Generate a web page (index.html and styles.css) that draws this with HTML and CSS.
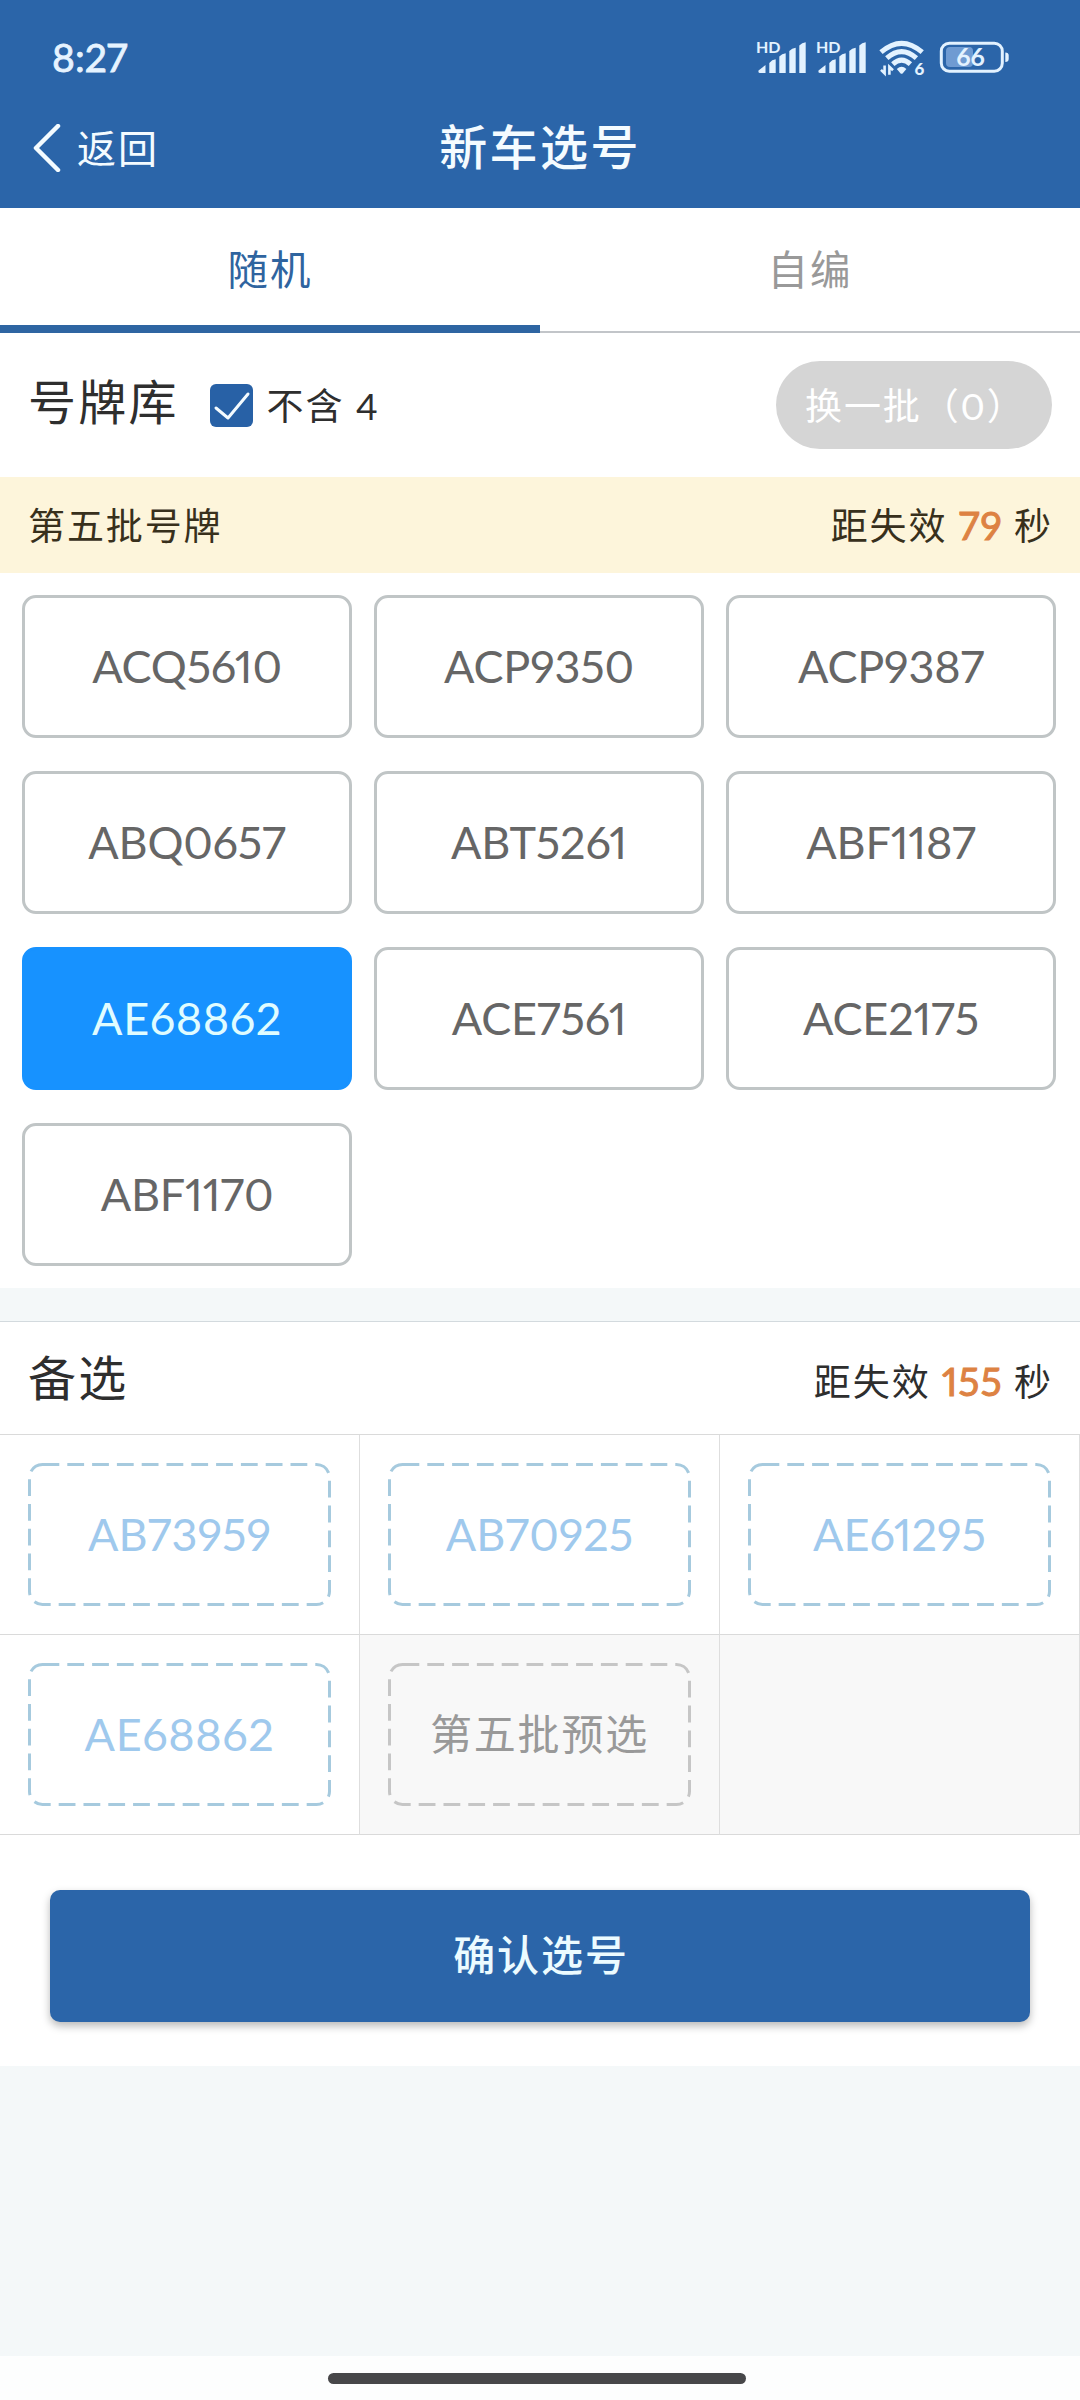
FILE: index.html
```html
<!DOCTYPE html>
<html lang="zh-CN">
<head>
  <meta charset="UTF-8">
  <title>新车选号</title>
  <link rel="stylesheet" href="styles.css">
</head>
<body>
  <header class="header">
    <div class="status">
      <span class="clock">8:27</span>
      <svg class="status-icons" viewBox="0 0 260 40">
        <defs>
          <g id="signal">
            <text x="0" y="13.2" class="hd">HD</text>
            <path d="M2.5 30.5 L9.5 25 V33 H4 Q2 33 2.5 30.5Z M13.3 23 Q16 19.5 19.7 19.2 V33 H13.3Z M23.3 16.5 Q26 13.5 29.7 13.2 V33 H23.3Z M33.3 11 Q36 8 39.7 7.7 V33 H33.3Z M43.3 5.5 Q46 2.5 49.7 2.2 V33 H43.3Z"/>
          </g>
        </defs>
        <use href="#signal"/>
        <use href="#signal" x="60"/>
        <g class="wifi">
          <path d="M125 12.2 Q145.6 -5.6 166.2 12.2"/>
          <path d="M130.8 18.2 Q145.6 5 160.4 18.2"/>
          <path d="M136.8 24.2 Q145.6 16.2 154.4 24.2"/>
        </g>
        <path d="M140.8 29 Q145.6 24.6 150.4 29 L146.8 33.2 Q145.6 34.4 144.4 33.2Z"/>
        <path class="arrows" d="M128.6 25.4 V33.4 L125 29.8 M133.4 34.8 V26.8 L137 30.2"/>
        <text x="158.6" y="35" class="six">6</text>
        <rect class="charge" x="190" y="7" width="27" height="20" rx="4"/>
        <rect class="battery" x="185.3" y="3.2" width="61" height="28" rx="8"/>
        <path d="M249.3 12.5 Q252.7 12.5 252.7 15.5 V19 Q252.7 22 249.3 22Z"/>
        <text x="214.5" y="26.3" class="level">66</text>
      </svg>
    </div>
    <div class="nav">
      <a class="back">
        <svg width="28" height="48" viewBox="0 0 28 48"><path d="M25 2 L3 24 L25 46"/></svg>
        <span>返回</span>
      </a>
      <h1 class="title">新车选号</h1>
    </div>
  </header>

  <nav class="tabs">
    <a class="tab active">随机</a>
    <a class="tab">自编</a>
  </nav>

  <section class="pool">
    <div class="pool-head">
      <h2>号牌库</h2>
      <label class="check">
        <svg width="43" height="43" viewBox="0 0 43 43"><rect width="43" height="43" rx="6"/><path d="M6 24 L18 34 L38 10"/></svg>
        <span>不含 4</span>
      </label>
      <button class="refresh" disabled>换一批（0）</button>
    </div>
    <div class="batch">
      <span>第五批号牌</span>
      <span>距失效 <b>79</b> 秒</span>
    </div>
    <div class="plates">
      <div class="plate">ACQ5610</div>
      <div class="plate">ACP9350</div>
      <div class="plate">ACP9387</div>
      <div class="plate">ABQ0657</div>
      <div class="plate">ABT5261</div>
      <div class="plate">ABF1187</div>
      <div class="plate selected">AE68862</div>
      <div class="plate">ACE7561</div>
      <div class="plate">ACE2175</div>
      <div class="plate">ABF1170</div>
    </div>
  </section>

  <section class="backup">
    <div class="backup-head">
      <h2>备选</h2>
      <span>距失效 <b>155</b> 秒</span>
    </div>
    <div class="slots">
      <div class="slot"><div class="dash"><svg><rect x="1.5" y="1.5" width="300" height="140" rx="13"/></svg>AB73959</div></div>
      <div class="slot"><div class="dash"><svg><rect x="1.5" y="1.5" width="300" height="140" rx="13"/></svg>AB70925</div></div>
      <div class="slot"><div class="dash"><svg><rect x="1.5" y="1.5" width="300" height="140" rx="13"/></svg>AE61295</div></div>
      <div class="slot"><div class="dash wide"><svg><rect x="1.5" y="1.5" width="300" height="140" rx="13"/></svg>AE68862</div></div>
      <div class="slot empty"><div class="dash"><svg><rect x="1.5" y="1.5" width="300" height="140" rx="13"/></svg>第五批预选</div></div>
      <div class="slot empty"></div>
    </div>
    <div class="actions">
      <button class="confirm">确认选号</button>
    </div>
  </section>

  <footer class="home"><div class="home-bar"></div></footer>
</body>
</html>
```
FILE: styles.css
```css
* {
  box-sizing: border-box;
}
body {
  margin: 0;
  min-height: 2400px;
  display: flex;
  flex-direction: column;
  background: #f4f8f9;
  color: #2e2e2e;
  font-family: Lato, "Noto Sans CJK SC", sans-serif;
  font-size: 37px;
  font-variant-numeric: proportional-nums;
  letter-spacing: 1.9px;
}
h1, h2 {
  margin: 0;
  font-weight: 400;
}
button {
  border: none;
  font: inherit;
  letter-spacing: inherit;
}

/* header */
.header {
  height: 208px;
  background: #2b65a9;
  color: #f4fbff;
}
.status {
  height: 88px;
  padding: 26px 64px 0 52px;
  display: flex;
  justify-content: space-between;
}
.clock {
  height: 62px;
  line-height: 62px;
  font-size: 39px;
  letter-spacing: 0;
  color: #e6f3ff;
  -webkit-text-stroke: 0.8px #e6f3ff;
}
.status-icons {
  width: 260px;
  height: 40px;
  margin-top: 14px;
  fill: #e3f2ff;
  letter-spacing: 0;
}
.hd {
  font-size: 16px;
  font-weight: 700;
}
.wifi path {
  fill: none;
  stroke: #e3f2ff;
  stroke-width: 5;
}
.arrows {
  fill: none;
  stroke: #e3f2ff;
  stroke-width: 2.6;
}
.six {
  font-size: 17px;
  font-weight: 900;
}
.battery {
  fill: none;
  stroke: #e3f2ff;
  stroke-width: 3;
}
.charge {
  fill: #6f9bd2;
}
.level {
  font-size: 25px;
  font-weight: 700;
  text-anchor: middle;
}
.nav {
  height: 120px;
  padding: 0 33px;
  display: grid;
  grid-template-columns: 1fr auto 1fr;
  align-items: center;
}
.back {
  display: flex;
  align-items: center;
  gap: 16px;
  font-size: 39px;
}
.back span {
  padding-bottom: 5px;
}
.back svg {
  fill: none;
  stroke: #f4fbff;
  stroke-width: 4.5;
  stroke-linecap: round;
  stroke-linejoin: round;
}
.title {
  padding-bottom: 8px;
  font-size: 48px;
  font-weight: 500;
  letter-spacing: 2.4px;
}

/* tabs */
.tabs {
  height: 125px;
  display: flex;
  background: #fff;
}
.tab {
  flex: 1;
  display: flex;
  align-items: center;
  justify-content: center;
  padding-bottom: 5px;
  border-bottom: 2px solid #c2c5c9;
  color: #999;
  font-size: 40.5px;
}
.tab.active {
  padding: 1px 0 0;
  border-bottom: 8px solid #2e65a2;
  color: #2f649f;
}

/* number pool */
.pool {
  background: #fff;
}
.pool-head {
  height: 144px;
  padding: 0 28px;
  display: flex;
  align-items: center;
}
h2 {
  font-size: 48px;
  letter-spacing: 2.2px;
  padding-bottom: 13px;
}
.check {
  display: flex;
  align-items: center;
  gap: 14px;
  margin-left: 31px;
}
.check span {
  padding-bottom: 3px;
}
.check rect {
  fill: #2861a6;
}
.check path {
  fill: none;
  stroke: #f4fbff;
  stroke-width: 3;
  stroke-linecap: round;
  stroke-linejoin: round;
}
.refresh {
  width: 276px;
  height: 88px;
  margin-left: auto;
  padding: 0 0 3px 29px;
  border-radius: 44px;
  background: #d5d5d5;
  color: #fff;
  text-align: left;
  white-space: nowrap;
}
.batch {
  height: 96px;
  padding: 0 27px 3px 28px;
  display: flex;
  align-items: center;
  justify-content: space-between;
  background: #fdf5db;
  color: #38301c;
}
b {
  color: #dd8243;
  font-weight: 400;
  font-size: 39px;
  letter-spacing: 1px;
  -webkit-text-stroke: 1px #dd8243;
}
.plates {
  padding: 22px 24px 22px 22px;
  display: grid;
  grid-template-columns: repeat(3, 330px);
  grid-auto-rows: 143px;
  gap: 33px 22px;
}
.plate {
  display: flex;
  align-items: center;
  justify-content: center;
  padding-bottom: 2px;
  border: 3px solid #c0c5c6;
  border-radius: 14px;
  color: #666;
  font-size: 45px;
  letter-spacing: -0.2px;
}
.plate.selected {
  border-color: #1792ff;
  background: #1792ff;
  color: #e0fcff;
  letter-spacing: 0.6px;
}

/* backup numbers */
.backup {
  margin-top: 33px;
  border-top: 1px solid #d3dade;
  background: #fff;
}
.backup-head {
  height: 113px;
  padding: 4px 27px 0 28px;
  display: flex;
  align-items: center;
  justify-content: space-between;
  border-bottom: 1px solid #dadada;
}
.backup-head h2 {
  padding-bottom: 11px;
}
.slots {
  display: grid;
  grid-template-columns: repeat(3, 360px);
  grid-auto-rows: 200px;
}
.slot {
  padding: 28px;
  border-right: 1px solid #dedede;
  border-bottom: 1px solid #dadada;
}
.slot.empty {
  background: #f8f8f8;
}
.dash {
  position: relative;
  width: 303px;
  height: 143px;
  padding-bottom: 2px;
  display: flex;
  align-items: center;
  justify-content: center;
  color: #9fc9ed;
  font-size: 45px;
  letter-spacing: 0;
}
.dash.wide {
  letter-spacing: 0.6px;
}
.dash svg {
  position: absolute;
  inset: 0;
  width: 303px;
  height: 143px;
  fill: none;
  stroke: #a6cade;
  stroke-width: 3;
  stroke-dasharray: 16.8 8;
}
.empty .dash {
  padding-bottom: 6px;
  color: #999;
  font-size: 42px;
  letter-spacing: 1.8px;
}
.empty .dash svg {
  stroke: #c6c6c6;
}
.actions {
  padding: 55px 50px 44px;
}
.confirm {
  display: block;
  width: 980px;
  height: 132px;
  padding: 0 0 7px 2px;
  border-radius: 10px;
  background: #2b65a9;
  box-shadow: 0 4px 8px rgba(0, 0, 0, 0.28);
  color: #ecfbff;
  font-size: 42px;
  font-weight: 500;
}

/* home indicator */
.home {
  height: 44px;
  margin-top: auto;
  padding-top: 17px;
  background: #fdfefe;
}
.home-bar {
  width: 418px;
  height: 11px;
  margin-left: 328px;
  border-radius: 6px;
  background: #474749;
}
```
